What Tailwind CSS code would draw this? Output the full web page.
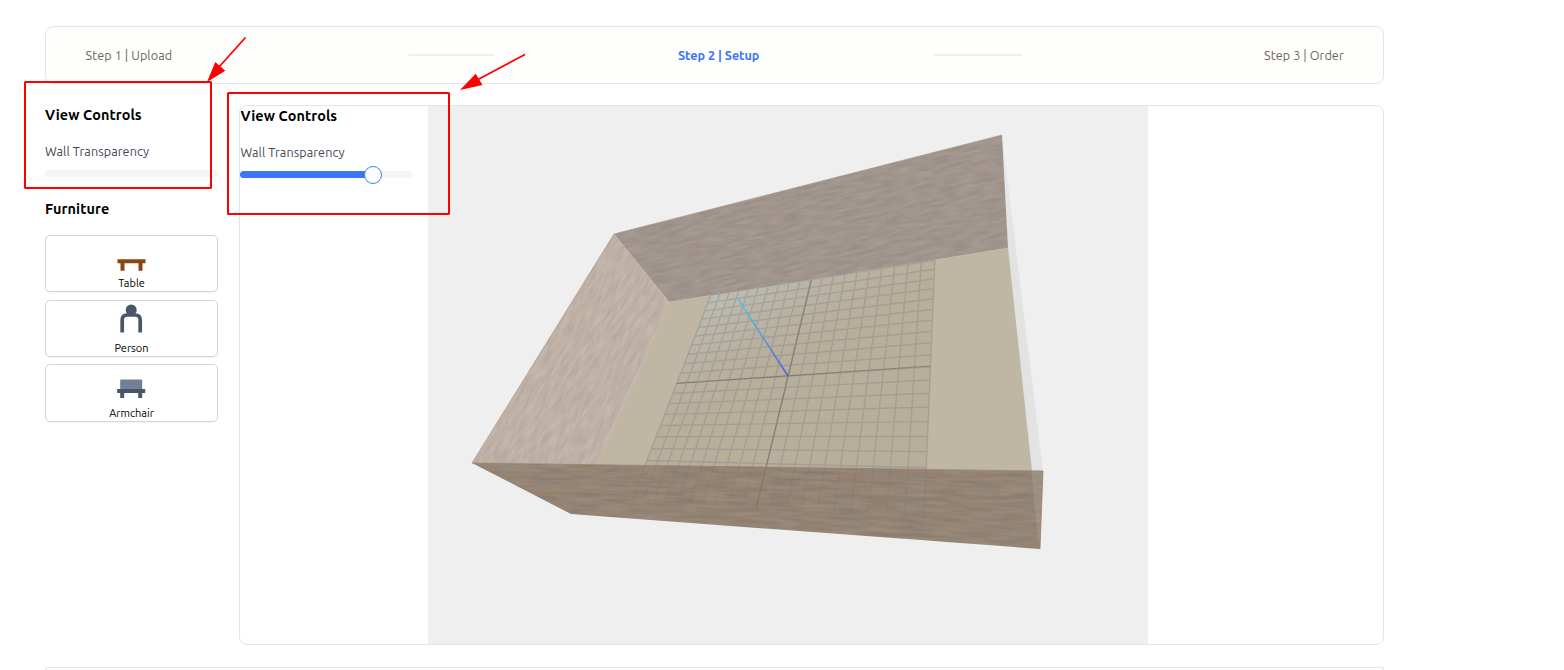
<!DOCTYPE html>
<html lang="en">
<head>
<meta charset="utf-8">
<title>Room setup</title>
<script src="https://cdn.jsdelivr.net/npm/@tailwindcss/browser@4"></script>
</head>
<body class="relative h-[670px] w-[1564px] overflow-hidden bg-white font-['Ubuntu','Noto_Sans',sans-serif] text-black">
<div class="flex w-[1384px] flex-col pt-[26px] pl-[45px]">
  <nav class="flex h-[58px] shrink-0 items-center rounded-lg border border-[#e4e5e4] bg-[#fefefc] pl-[39.500px] text-[12.600px] whitespace-nowrap text-[#6d6660]">
    <span class="w-[322.500px] pt-px tracking-[0.08px]">Step 1 | Upload</span>
    <span class="h-0.5 w-[86px] rounded bg-[#efefee]"></span>
    <span class="ml-[184px] w-[256px] pt-px font-semibold tracking-[-0.04px] text-[#3b76f6]">Step 2 | Setup</span>
    <span class="h-0.5 w-[88px] rounded bg-[#efefee]"></span>
    <span class="ml-[242px] pt-px tracking-[0.08px]">Step 3 | Order</span>
  </nav>
  <div class="mt-[21px] flex h-[540px] shrink-0 gap-[21px]">
    <aside class="flex w-[173px] shrink-0 flex-col">
      <h2 class="h-5 text-[14.400px] leading-5 font-bold tracking-[0.1px] whitespace-nowrap">View Controls</h2>
      <p class="mt-4 h-5 text-[12.600px] leading-[21px] tracking-[0.09px] whitespace-nowrap text-[#3f4755]">Wall Transparency</p>
      <div class="mt-[9px] h-[7px] shrink-0 rounded-full bg-[#f5f5f4]"></div>
      <h2 class="mt-[22px] h-5 text-[14.400px] leading-5 font-bold tracking-[0.12px]">Furniture</h2>
      <div class="mt-4 flex flex-col gap-[7.500px] text-[11px] leading-4">
        <button class="flex h-[57px] flex-col items-center rounded-[5px] border border-[#d1d5db] pt-[3px] shadow-xs">
          <svg class="h-9 w-9 shrink-0" viewBox="0.5 -0.300 36 36"><path fill="#8b4513" d="M4 20h28v4H4zM7 24h4v7.500H7zM25 24h4v7.500h-4z"/></svg>
          <span>Table</span>
        </button>
        <button class="flex h-[57px] flex-col items-center rounded-[5px] border border-[#d1d5db] pt-[3px] shadow-xs">
          <svg class="h-9 w-9 shrink-0" viewBox="0.8 0 36 36"><circle cx="18" cy="6" r="5.500" fill="#4a5568"/><path d="M9 28.500V16q0-5 5-5h8q5 0 5 5v12.500" fill="none" stroke="#4a5568" stroke-width="3.700"/></svg>
          <span>Person</span>
        </button>
        <button class="flex h-[58px] flex-col items-center rounded-[5px] border border-[#d1d5db] pt-[3px] shadow-xs">
          <svg class="h-9 w-9 shrink-0" viewBox="0.8 -0.500 36 36"><rect x="7" y="11" width="22" height="11" rx="1" fill="#718096"/><path fill="#4a5568" d="M4 20.500h28v4H4zM7 24h4v5.500H7zM25 24h4v5.500h-4z"/></svg>
          <span class="pt-px">Armchair</span>
        </button>
      </div>
    </aside>
    <main class="flex h-[540px] w-[1145px] overflow-hidden rounded-lg border border-[#e4e5e4]">
      <section class="w-[188px] shrink-0">
        <h2 class="h-5 pl-[0.500px] text-[14.400px] leading-5 font-bold tracking-[0.1px] whitespace-nowrap">View Controls</h2>
        <p class="mt-4 h-5 pl-[0.500px] text-[12.600px] leading-[21px] tracking-[0.09px] whitespace-nowrap text-[#3f4755]">Wall Transparency</p>
        <div class="mt-1 flex h-[18px] w-[173px] items-start pt-[5px]">
          <div class="h-[7px] w-[128px] rounded-l-full bg-[#3b76f6]"></div>
          <div class="z-10 -mx-1 -mt-[5px] h-[18px] w-[18px] shrink-0 rounded-full border border-[#3b82f6] bg-white"></div>
          <div class="h-[7px] flex-1 rounded-r-full bg-[#f5f5f4]"></div>
        </div>
      </section>
      <svg class="h-[538px] w-[720px] shrink-0 bg-[#efefef]" viewBox="428 106 720 538">
        <defs>
          <filter id="grainA" x="0" y="0" width="1" height="1" color-interpolation-filters="sRGB">
            <feTurbulence type="fractalNoise" baseFrequency="0.05 0.33" numOctaves="3" seed="4"/>
            <feColorMatrix values="0.10 0.05 0 0 0.552  0.10 0 0 0 0.533  0.10 -0.05 0 0 0.528  0 0 0 0 1"/>
          </filter>
          <filter id="grainB" x="0" y="0" width="1" height="1" color-interpolation-filters="sRGB">
            <feTurbulence type="fractalNoise" baseFrequency="0.055 0.32" numOctaves="3" seed="9"/>
            <feColorMatrix values="0.10 0.06 0 0 0.665  0.11 0 0 0 0.637  0.11 -0.07 0 0 0.632  0 0 0 0 1"/>
          </filter>
          <filter id="grainC" x="0" y="0" width="1" height="1" color-interpolation-filters="sRGB">
            <feTurbulence type="fractalNoise" baseFrequency="0.03 0.27" numOctaves="3" seed="7"/>
            <feColorMatrix values="0.10 0.06 0 0 0.498  0.11 0 0 0 0.462  0.11 -0.07 0 0 0.436  0 0 0 0 1"/>
          </filter>
          <clipPath id="back"><path d="M614 234 1002 135 1008 248 669 302z"/></clipPath>
          <clipPath id="left"><path d="M614 234 669 302 596 465 472 463z"/></clipPath>
          <clipPath id="front"><path d="M472 463 1043 471 1040 549 571 514z"/></clipPath>
          <linearGradient id="axis" gradientUnits="userSpaceOnUse" x1="738" y1="299" x2="788" y2="376"><stop stop-color="#5cc5df"/><stop offset=".5" stop-color="#569fd6"/><stop offset="1" stop-color="#5f5fd6"/></linearGradient>
          <linearGradient id="sheen" gradientUnits="userSpaceOnUse" x1="725" y1="285" x2="775" y2="375"><stop stop-color="#bfc0bd" stop-opacity=".85"/><stop offset="1" stop-color="#b9af9c" stop-opacity="0"/></linearGradient>
          <linearGradient id="glass" x1="0" y1="0" x2="0" y2="1"><stop stop-color="#e9e9e9"/><stop offset=".4" stop-color="#e2e2e2"/><stop offset="1" stop-color="#e3e3e3"/></linearGradient>
        </defs>
        <path d="M1002 135 1043 471 1031 470 1007 248z" fill="url(#glass)"/>
        <path d="M669 302 1008 248 1032 471 596 465z" fill="#c0b6a4"/>
        <path d="M711 295 935 260 924 520 632 499z" fill="#b8af9b"/>
        <path d="M711 295 935 260 924 520 632 499z" fill="url(#sheen)"/>
        <path id="grid" fill="none" stroke="#82838a" stroke-opacity=".38" stroke-width="1.400"/>
        <path d="M811.500 280 756 509M676.500 383.500 930.500 366" stroke="#6d675f" stroke-opacity=".6" stroke-width="1.200"/>
        <path d="M738 299 788 376" stroke="url(#axis)" stroke-width="1.800"/>
        <g clip-path="url(#back)"><g transform="rotate(-12 614 234)"><rect x="580" y="200" width="450" height="220" filter="url(#grainA)"/></g></g>
        <g clip-path="url(#left)"><g transform="rotate(119 614 234)"><rect x="560" y="110" width="360" height="290" filter="url(#grainB)"/></g></g>
        <g clip-path="url(#front)"><g transform="rotate(2 472 463)"><rect x="460" y="430" width="620" height="140" filter="url(#grainC)"/></g>
          <path id="gridFront" fill="none" stroke="#6f675f" stroke-opacity=".16" stroke-width="1.200"/>
          <path d="M766 467 756 509" stroke="#625a50" stroke-opacity=".3"/>
          <path d="M1031 469 1045 470 1039 549z" fill="#b0a69f" fill-opacity=".35"/>
        </g>
        <path d="M472 463 1043 471 1040 549" fill="none" stroke="#987e67" stroke-opacity=".7"/>
        <path d="M472 463 614 234 1002 135" fill="none" stroke="#a88f7d" stroke-opacity=".6"/>
      </svg>
    </main>
  </div>
  <div class="mt-[22px] h-[3px] shrink-0 rounded-t-lg border border-b-0 border-[#e4e5e4]"></div>
</div>
<svg class="pointer-events-none absolute inset-0 h-[670px] w-[1564px]" viewBox="0 0 1564 670">
  <g fill="none" stroke="#f00" stroke-width="2">
    <rect x="25" y="82" width="186" height="106" rx=".5"/><rect x="228" y="93" width="221" height="121" rx=".5"/>
    <path d="M245.500 37.500 219 67M525 54.500 478 79.500" stroke-width="1.800"/>
  </g>
  <path fill="#f00" d="M207 82 225.300 70.700 215.300 62zM460 90 482.500 85 475.700 73.700z"/>
</svg>
<script>
// 20x20 floor grid projected onto the floor plane
const [A, B, C, D] = [[711,295],[935,260],[924,520],[632,499]];
const sx=A[0]-B[0]+C[0]-D[0], sy=A[1]-B[1]+C[1]-D[1];
const dx1=B[0]-C[0], dx2=D[0]-C[0], dy1=B[1]-C[1], dy2=D[1]-C[1];
const det=dx1*dy2-dx2*dy1, g=(sx*dy2-dx2*sy)/det, h=(dx1*sy-sx*dy1)/det;
const pt=(u,v)=>{const w=g*u+h*v+1;return [((B[0]-A[0]+g*B[0])*u+(D[0]-A[0]+h*D[0])*v+A[0])/w,((B[1]-A[1]+g*B[1])*u+(D[1]-A[1]+h*D[1])*v+A[1])/w].map(n=>n.toFixed(2)).join(' ');};
let d='';
for(let i=0;i<=20;i++){const t=i/20;d+=`M${pt(t,0)}L${pt(t,1)}M${pt(0,t)}L${pt(1,t)}`;}
document.getElementById('grid').setAttribute('d',d);
document.getElementById('gridFront').setAttribute('d',d);
</script>
</body>
</html>
